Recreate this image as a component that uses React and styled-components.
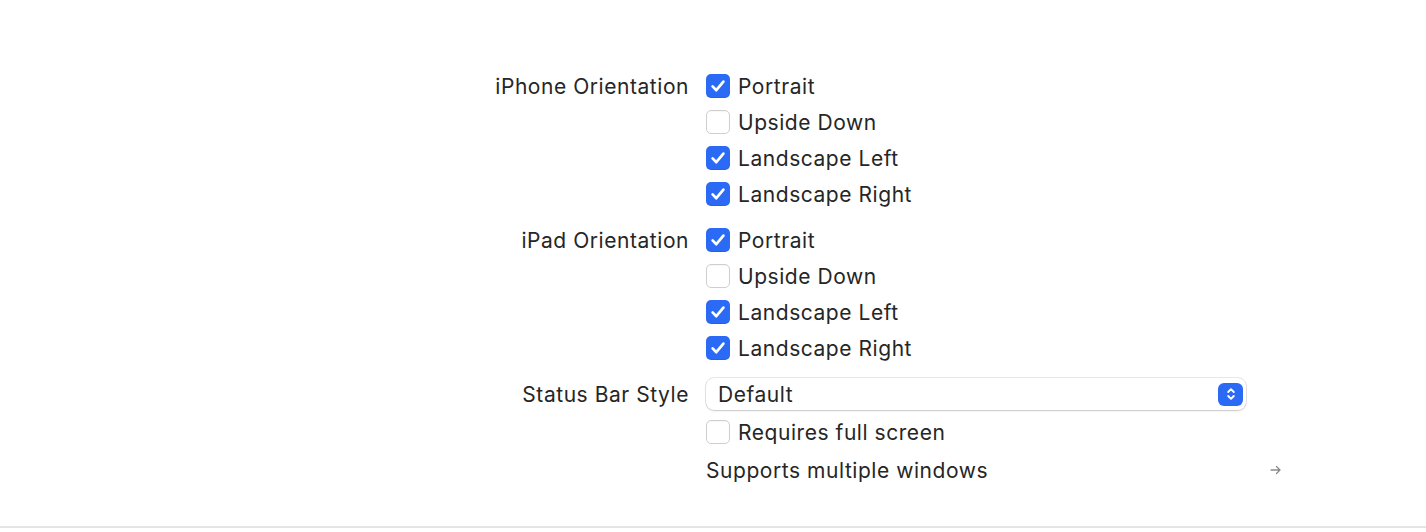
import styled, { createGlobalStyle } from 'styled-components'

const GlobalStyle = createGlobalStyle`
  html, body {
    margin: 0;
    background: #ffffff;
    font-family: Inter, "Noto Sans", "Liberation Sans", sans-serif;
    color: #262626;
  }
`

const Page = styled.div`
  height: 528px;
  box-sizing: border-box;
  display: flex;
  flex-direction: column;
  border-bottom: 2px solid #e4e4e4;
  background: #fff;
`

const Form = styled.div`
  padding-top: 68px;
  display: grid;
  grid-template-columns: 1fr 720px;
  column-gap: 17px;
  row-gap: 10px;
  flex: 1;
  align-content: start;
`

const Label = styled.div`
  display: flex;
  align-items: center;
  justify-content: flex-end;
  height: 36px;
  font-size: 21px;
  letter-spacing: 0.55px;
  white-space: nowrap;
`

const Options = styled.div`
  display: flex;
  flex-direction: column;
`

const Row = styled.label`
  display: flex;
  align-items: center;
  gap: 8px;
  height: ${({ $h }) => $h || 36}px;
  font-size: 21px;
  letter-spacing: 0.55px;
  width: 578px;
`

const Box = styled.span`
  width: 24px;
  height: 24px;
  box-sizing: border-box;
  border-radius: 5px;
  display: flex;
  align-items: center;
  justify-content: center;
  flex-shrink: 0;
  background: ${({ $on }) => ($on ? '#2b6af5' : '#ffffff')};
  border: ${({ $on }) => ($on ? 'none' : '1px solid #cfcfcf')};
  box-shadow: ${({ $on }) => ($on ? 'inset 0 -1px 0 rgba(0,0,0,0.08)' : 'inset 0 1px 1px rgba(0,0,0,0.04)')};
`

const Select = styled.div`
  width: 540px;
  height: 32px;
  box-sizing: border-box;
  border-radius: 8px;
  background: #fff;
  box-shadow: 0 0 0 0.5px rgba(0, 0, 0, 0.18), 0 1px 2px rgba(0, 0, 0, 0.14);
  display: flex;
  align-items: center;
  justify-content: space-between;
  padding: 0 3px 0 12px;
`

const Stepper = styled.span`
  width: 25px;
  height: 23px;
  border-radius: 6px;
  background: #2b6af5;
  display: flex;
  align-items: center;
  justify-content: center;
`

const Spacer = styled.span`
  flex: 1;
`

const Check = () => (
  <svg width="18" height="18" viewBox="0 0 18 18">
    <path d="M3.6 9.4 L7.3 13.2 L14.4 4.6" fill="none" stroke="#fff" strokeWidth="2.7" strokeLinecap="round" strokeLinejoin="round" />
  </svg>
)

const Option = ({ on, children }) => (
  <Row>
    <Box $on={on}>{on && <Check />}</Box>
    {children}
  </Row>
)

const orient = [
  ['Portrait', true],
  ['Upside Down', false],
  ['Landscape Left', true],
  ['Landscape Right', true],
]

export default function App() {
  return (
    <>
      <GlobalStyle />
      <Page>
        <Form>
          <Label>iPhone Orientation</Label>
          <Options>
            {orient.map(([t, on]) => <Option key={t} on={on}>{t}</Option>)}
          </Options>

          <Label>iPad Orientation</Label>
          <Options>
            {orient.map(([t, on]) => <Option key={t} on={on}>{t}</Option>)}
          </Options>

          <Label>Status Bar Style</Label>
          <Options>
            <Row as="div">
              <Select>
                Default
                <Stepper>
                  <svg width="12" height="16" viewBox="0 0 12 16">
                    <path d="M3.2 6 L6 3.2 L8.8 6 M3.2 10 L6 12.8 L8.8 10" fill="none" stroke="#fff" strokeWidth="1.9" strokeLinecap="round" strokeLinejoin="round" />
                  </svg>
                </Stepper>
              </Select>
            </Row>
            <Row $h={40}>
              <Box />
              Requires full screen
            </Row>
            <Row as="div" $h={36}>
              Supports multiple windows
              <Spacer />
              <svg width="14" height="12" viewBox="0 0 14 12" style={{ marginRight: 1 }}>
                <path d="M2 6 H11 M7.5 2.5 L11 6 L7.5 9.5" fill="none" stroke="#8a8a8a" strokeWidth="1.3" strokeLinecap="round" strokeLinejoin="round" />
              </svg>
            </Row>
          </Options>
        </Form>
      </Page>
    </>
  )
}
